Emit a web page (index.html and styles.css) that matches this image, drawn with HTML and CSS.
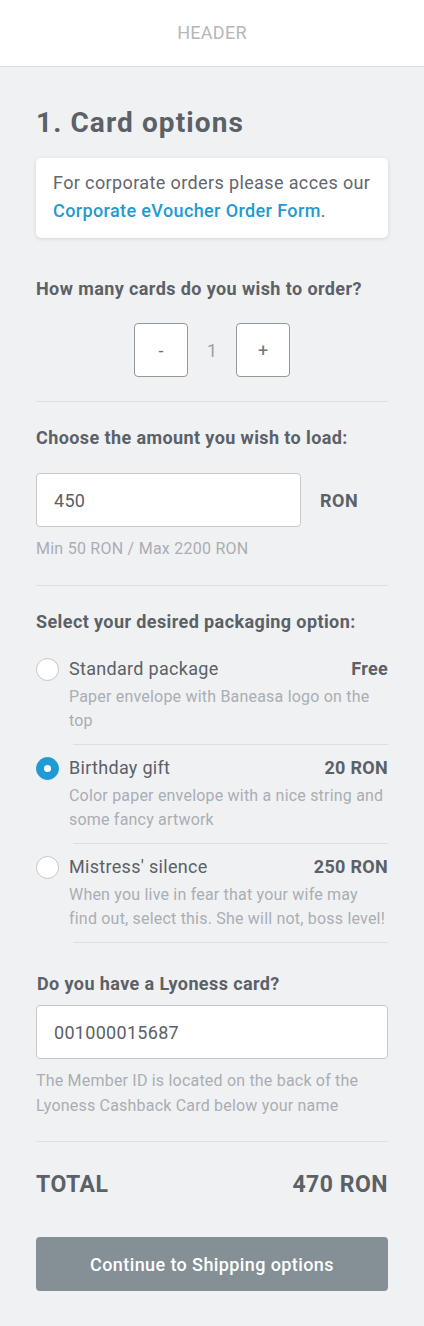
FILE: index.html
```html
<!DOCTYPE html>
<html lang="en">
<head>
<meta charset="utf-8">
<title>Card options</title>
<link rel="stylesheet" href="styles.css">
</head>
<body>
<header class="header">HEADER</header>
<main class="main">
  <h1 class="title">1. Card options</h1>
  <div class="info-card">
    <p>For corporate orders please acces our <a href="#" class="link">Corporate eVoucher Order Form</a>.</p>
  </div>

  <h2 class="label label-cards">How many cards do you wish to order?</h2>
  <div class="stepper">
    <button class="step-btn">-</button>
    <span class="step-val">1</span>
    <button class="step-btn">+</button>
  </div>

  <hr class="divider divider-a">

  <h2 class="label label-amount">Choose the amount you wish to load:</h2>
  <div class="amount-row">
    <div class="input amount-input">450</div>
    <span class="currency">RON</span>
  </div>
  <p class="hint hint-amount">Min 50 RON / Max 2200 RON</p>

  <hr class="divider divider-b">

  <h2 class="label label-pack">Select your desired packaging option:</h2>
  <div class="options">
    <div class="option">
      <span class="radio"></span>
      <div class="option-body">
        <div class="option-head"><span class="option-name">Standard package</span><span class="option-price">Free</span></div>
        <p class="option-desc">Paper envelope with Baneasa logo on the top</p>
      </div>
    </div>
    <div class="option">
      <span class="radio radio-on"></span>
      <div class="option-body">
        <div class="option-head"><span class="option-name">Birthday gift</span><span class="option-price">20 RON</span></div>
        <p class="option-desc">Color paper envelope with a nice string and some fancy artwork</p>
      </div>
    </div>
    <div class="option">
      <span class="radio"></span>
      <div class="option-body">
        <div class="option-head"><span class="option-name">Mistress' silence</span><span class="option-price">250 RON</span></div>
        <p class="option-desc">When you live in fear that your wife may find out, select this. She will not, boss level!</p>
      </div>
    </div>
  </div>

  <h2 class="label label-lyo">Do you have a Lyoness card?</h2>
  <div class="input lyo-input">001000015687</div>
  <p class="hint hint-lyo">The Member ID is located on the back of the Lyoness Cashback Card below your name</p>

  <hr class="divider divider-c">

  <div class="total"><span>TOTAL</span><span>470 RON</span></div>

  <button class="continue">Continue to Shipping options</button>
</main>
</body>
</html>
```

FILE: styles.css
```css
* { box-sizing: border-box; }
html, body { margin: 0; padding: 0; }
body {
  background: #f0f1f3;
  font-family: Roboto, "Liberation Sans", Arial, sans-serif;
  color: #5b6166;
}
.header {
  height: 67px;
  background: #fff;
  border-bottom: 1px solid #d9dbde;
  display: flex;
  align-items: center;
  justify-content: center;
  font-size: 18px;
  letter-spacing: 0.3px;
  color: #b3b8bd;
  padding-bottom: 1px;
}
.main {
  padding: 39px 36px 36px;
}
.title {
  margin: 0;
  font-size: 28px;
  line-height: 34px;
  font-weight: 700;
  letter-spacing: 1.1px;
  color: #5b6166;
}
.info-card {
  margin-top: 18px;
  background: #fff;
  border-radius: 5px;
  box-shadow: 0 1px 4px rgba(0,0,0,0.12);
  padding: 11px 17px 13px;
}
.info-card p {
  margin: 0;
  font-size: 18px;
  line-height: 28px;
  letter-spacing: 0.38px;
  color: #62676c;
}
.link {
  color: #1f9ad4;
  font-weight: 500;
  text-decoration: none;
}
.label {
  margin: 0;
  font-size: 18px;
  line-height: 24px;
  font-weight: 700;
  letter-spacing: 0.4px;
  color: #5b6166;
}
.label-cards { margin-top: 39px; }
.stepper {
  margin-top: 22px;
  display: flex;
  justify-content: center;
  align-items: center;
}
.step-btn {
  width: 54px;
  height: 54px;
  background: #fff;
  border: 1px solid #8f999e;
  border-radius: 4px;
  font-family: inherit;
  font-size: 18px;
  color: #6d7378;
  padding: 0;
}
.step-val {
  width: 48px;
  text-align: center;
  font-size: 18px;
  color: #9aa0a5;
}
.divider {
  border: 0;
  border-top: 1px solid #dcdfe2;
  margin: 0;
}
.divider-a { margin-top: 24px; }
.label-amount { margin-top: 24px; }
.amount-row {
  margin-top: 23px;
  display: flex;
  align-items: center;
}
.input {
  height: 54px;
  background: #fff;
  border: 1px solid #c6c9cc;
  border-radius: 4px;
  display: flex;
  align-items: center;
  padding-left: 17px;
  font-size: 18px;
  letter-spacing: 0.3px;
  color: #5b6166;
}
.amount-input { width: 265px; }
.currency {
  margin-left: 19px;
  font-size: 18px;
  font-weight: 700;
  letter-spacing: 0.5px;
  color: #5b6166;
}
.hint {
  margin: 0;
  font-size: 16px;
  letter-spacing: 0.2px;
  color: #a9aeb3;
}
.hint-amount {
  margin-top: 12px;
  line-height: 20px;
  letter-spacing: 0.25px;
}
.divider-b { margin-top: 26px; }
.label-pack { margin-top: 24px; }
.options { margin-top: 12px; }
.option {
  display: flex;
  align-items: flex-start;
  padding-top: 11px;
}
.radio {
  flex: none;
  width: 23px;
  height: 23px;
  border-radius: 50%;
  border: 1px solid #c3c7cb;
  background: #fff;
  margin-top: 1px;
  position: relative;
}
.radio-on {
  background: #1f9ad4;
  border-color: #1f9ad4;
}
.radio-on::after {
  content: "";
  position: absolute;
  left: 50%;
  top: 50%;
  width: 7px;
  height: 7px;
  margin: -3.5px 0 0 -3.5px;
  border-radius: 50%;
  background: #fff;
}
.option-body {
  flex: 1;
  margin-left: 14px;
  padding-bottom: 11px;
  border-bottom: 1px solid #dcdfe2;
}
.option-head {
  display: flex;
  justify-content: space-between;
  line-height: 24px;
  margin-left: -4px;
}
.option-name {
  font-size: 18px;
  letter-spacing: 0.3px;
  color: #5b6166;
}
.option-price {
  font-size: 18px;
  font-weight: 700;
  letter-spacing: 0.3px;
  color: #5b6166;
}
.option-desc {
  margin: 4px 0 0 -4px;
  font-size: 16px;
  line-height: 24px;
  letter-spacing: 0.2px;
  color: #a9aeb3;
}
.label-lyo { margin-top: 29px; padding-left: 1px; }
.lyo-input { margin-top: 9px; }
.hint-lyo {
  margin-top: 9px;
  line-height: 25px;
}
.divider-c { margin-top: 23px; }
.total {
  margin-top: 29px;
  display: flex;
  justify-content: space-between;
  font-size: 23px;
  line-height: 28px;
  font-weight: 700;
  letter-spacing: 0.5px;
  color: #5b6166;
}
.continue {
  margin-top: 38px;
  width: 100%;
  height: 54px;
  border: 0;
  border-radius: 4px;
  background: #848f96;
  color: #fff;
  font-family: inherit;
  font-size: 18px;
  font-weight: 500;
  letter-spacing: 0.4px;
}
```
